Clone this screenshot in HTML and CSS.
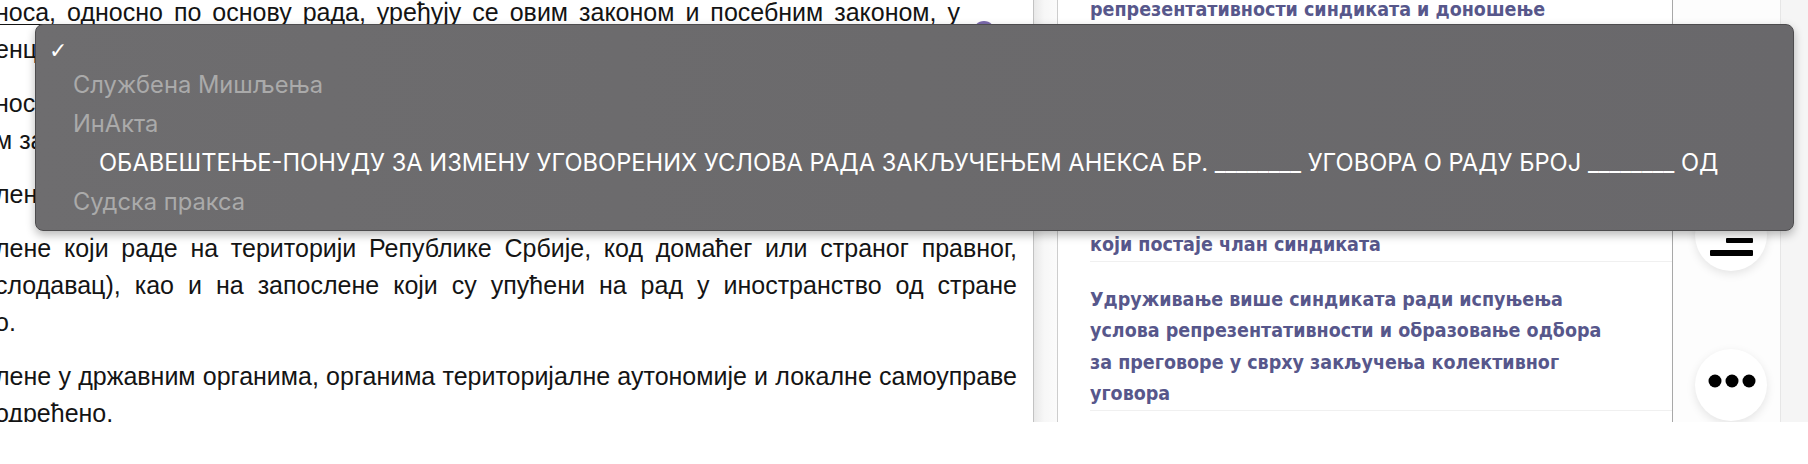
FILE: index.html
```html
<!DOCTYPE html>
<html lang="sr">
<head>
<meta charset="utf-8">
<title>Закон о раду</title>
<link rel="stylesheet" href="styles.css">
</head>
<body>
<div class="app">
  <div class="doc">
    <p class="para">
      <span class="jl first">носа, односно по основу рада, уређују се овим законом и посебним законом, у</span>
      <span class="ll">енцијама.</span>
    </p>
    <p class="para">
      <span class="jl">носа уређују се и колективним уговором и уговором о раду, а правилником о раду,</span>
      <span class="ll">м законом одређено.</span>
    </p>
    <p class="para">
      <span class="ll">лене код послодавца, ако законом није друкчије одређено.</span>
    </p>
    <p class="para">
      <span class="jl">лене који раде на територији Републике Србије, код домаћег или страног правног,</span>
      <span class="jl">слодавац), као и на запослене који су упућени на рад у иностранство од стране</span>
      <span class="ll">о.</span>
    </p>
    <p class="para">
      <span class="jl">лене у државним органима, органима територијалне аутономије и локалне самоуправе</span>
      <span class="ll">одређено.</span>
    </p>
    <span class="badge"></span>
  </div>
  <div class="gutter"></div>
  <div class="card">
    <div class="item first-item">
      <span class="ln">репрезентативности синдиката и доношење</span>
      <span class="ln">колективног уговора</span>
    </div>
    <div class="item">
      <span class="ln">Права синдиката и представника</span>
      <span class="ln">запослених у вези са заштитом</span>
      <span class="ln">њихових интереса</span>
    </div>
    <div class="item">
      <span class="ln">Права и обавезе запосленог</span>
      <span class="ln">који постаје члан синдиката</span>
    </div>
    <div class="item">
      <span class="ln">Удруживање више синдиката ради испуњења</span>
      <span class="ln">услова репрезентативности и образовање одбора</span>
      <span class="ln">за преговоре у сврху закључења колективног</span>
      <span class="ln">уговора</span>
    </div>
  </div>
  <div class="side">
    <div class="fab">
      <svg class="fab-icon" width="72" height="72" viewBox="0 0 72 72">
        <rect x="15" y="14" width="43" height="5" rx="1"/>
        <rect x="31" y="24" width="27" height="5" rx="1"/>
        <rect x="31" y="39" width="27" height="5" rx="1"/>
        <rect x="15" y="51" width="43" height="6" rx="1"/>
      </svg>
    </div>
    <div class="fab">
      <svg class="fab-icon" width="72" height="72" viewBox="0 0 72 72">
        <circle cx="20" cy="32" r="6.5"/>
        <circle cx="37" cy="32" r="6.5"/>
        <circle cx="54" cy="32" r="6.5"/>
      </svg>
    </div>
  </div>
  <div class="rest"></div>

  <div class="menu">
    <div class="row opt selected"><span class="check">✓</span></div>
    <div class="row grp">Службена Мишљења</div>
    <div class="row grp">ИнАкта</div>
    <div class="row opt">ОБАВЕШТЕЊЕ-ПОНУДУ ЗА ИЗМЕНУ УГОВОРЕНИХ УСЛОВА РАДА ЗАКЉУЧЕЊЕМ АНЕКСА БР. ________ УГОВОРА О РАДУ БРОЈ ________ ОД</div>
    <div class="row grp">Судска пракса</div>
  </div>
</div>
</body>
</html>
```

FILE: styles.css
```css
html, body {
  margin: 0;
  padding: 0;
  background: #ffffff;
  overflow: hidden;
}

.app {
  position: relative;
  display: flex;
  height: 422px;
  overflow: hidden;
  background: #ffffff;
}

/* ---------- document text ---------- */
.doc {
  position: relative;
  flex: 0 0 1038px;
  min-width: 0;
  box-sizing: border-box;
  margin-left: -5px;
  margin-top: -6px;
  padding-right: 16px;
  font-family: "Liberation Sans", Arial, sans-serif;
  font-size: 25px;
  line-height: 37px;
  color: #141414;
}

.para {
  margin: 0 0 17px 0;
}

.jl {
  display: block;
  text-align: justify;
  text-align-last: justify;
  white-space: nowrap;
}

.jl.first {
  margin-right: 57px;
  text-decoration: underline;
  text-underline-offset: 3px;
  text-decoration-thickness: 1px;
}

.ll {
  display: block;
  white-space: nowrap;
}

.badge {
  position: absolute;
  left: 978px;
  top: 27px;
  width: 22px;
  height: 22px;
  border-radius: 50%;
  background: #7b6aac;
}

/* ---------- gutter ---------- */
.gutter {
  flex: 0 0 24px;
  box-sizing: border-box;
  border-left: 1px solid #c2c2c2;
  background: linear-gradient(to right, #e9e9e9, #f7f7f7 45%, #fbfbfb);
}

/* ---------- card ---------- */
.card {
  flex: 0 0 616px;
  min-width: 0;
  overflow: hidden;
  box-sizing: border-box;
  border-left: 1px solid #cdcdcd;
  border-right: 1px solid #a8a8a8;
  padding-left: 32px;
  background: #ffffff;
  font-family: "DejaVu Sans Condensed", "DejaVu Sans", sans-serif;
  font-stretch: condensed;
  font-weight: bold;
  font-size: 19.5px;
  line-height: 31.5px;
  color: #57578b;
}

.item {
  padding-top: 22px;
  border-bottom: 1px solid #f0f0f0;
}

.item.first-item {
  padding-top: 0;
  margin-top: -6px;
}

.ln {
  display: block;
  white-space: nowrap;
}

/* ---------- side buttons ---------- */
.side {
  flex: 0 0 108px;
  min-width: 0;
  box-sizing: border-box;
  display: flex;
  flex-direction: column;
  align-items: center;
  gap: 78px;
  padding-top: 199px;
  padding-left: 8px;
  border-right: 1px solid #e6e6e6;
  background: #fdfdfd;
}

.fab {
  flex: 0 0 72px;
  width: 72px;
  height: 72px;
  border-radius: 50%;
  background: #ffffff;
  box-shadow: 0 3px 10px rgba(0, 0, 0, 0.10);
  display: flex;
}

.fab-icon {
  fill: #000000;
}

.rest {
  flex: 1 1 auto;
  min-width: 0;
  background: #f5f5f5;
}

/* ---------- native select popup ---------- */
.menu {
  position: absolute;
  left: 35px;
  top: 24px;
  width: 1759px;
  box-sizing: border-box;
  padding: 6px 0 9px 0;
  border: 1px solid #4d4c4e;
  border-radius: 8px;
  background: linear-gradient(to right, #6e6d6f, #6b6a6c 50%, #69686b);
  box-shadow: 0 4px 10px rgba(0, 0, 0, 0.28);
  font-family: "Inter", "Noto Sans", sans-serif;
  font-size: 23.7px;
}

.row {
  height: 39px;
  line-height: 39px;
  white-space: nowrap;
}

.row.grp {
  padding-left: 37px;
  color: #aaaaaa;
}

.row.opt {
  padding-left: 63px;
  color: #ffffff;
}

.row.selected {
  height: 34px;
  line-height: 38px;
  padding-left: 13px;
}

.check {
  font-family: "DejaVu Sans", sans-serif;
  font-size: 22px;
  font-weight: bold;
  color: #ffffff;
}
```
